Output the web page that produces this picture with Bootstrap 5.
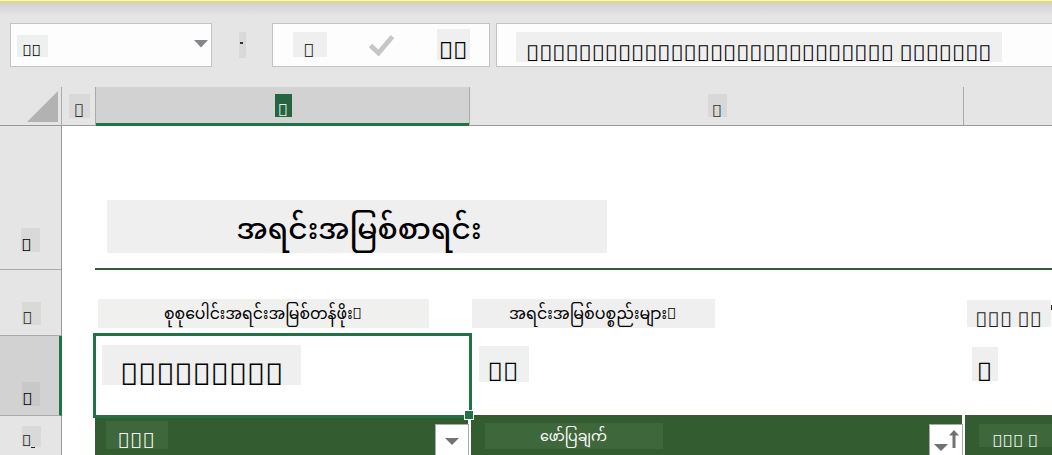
<!DOCTYPE html>
<html lang="my">
<head>
<meta charset="utf-8">
<meta name="viewport" content="width=device-width, initial-scale=1">
<title>Spreadsheet</title>
<link href="https://cdn.jsdelivr.net/npm/bootstrap@5.3.0/dist/css/bootstrap.min.css" rel="stylesheet">
<style>
body{width:1052px;height:455px;overflow:hidden;background:#e5e5e5;font-family:"Noto Sans",sans-serif;color:#000}
.notice{height:23px;border-top:1px solid #fff7b0;background:linear-gradient(#dada8b 0 2px,#d0d0d0 2px,#e5e5e5 14px)}
.bar{height:44px;padding-left:10px}
.bar>*{flex-shrink:0}
.field{background:#fdfdfd;border:1px solid #c3c3c3;height:44px}
.name-box{width:202px}
.tools{width:218px;margin-left:26px}
.formula{width:570px;margin-left:6px}
/* text chips: --w/--h size, --x/--y offset in the parent, --p text inset, --l line height, --f font size */
.chip{flex:none;width:var(--w);height:var(--h);margin:var(--y,0) 0 0 var(--x,0);padding-left:var(--p,0);font-size:var(--f);line-height:var(--l);background:var(--c,#efefef);white-space:pre}
.my{font-family:"Noto Sans Myanmar","Noto Sans",sans-serif}
.c-name{--w:31px;--h:22px;--x:6px;--y:11px;--p:5.6px;--f:15.3px;--l:30.2px;--c:#eef0ef}
.c-sep{--w:7px;--h:26px;--x:27px;--y:9px;--c:#d9d9d9}
.c-sep i{display:block;width:3px;height:2px;margin:10px 0 0 1px;background:#333}
.c-cancel{--w:34px;--h:25px;--x:20px;--y:8px;--p:10px;--f:18.5px;--l:35.6px;color:#333}
.c-fx{--w:33px;--h:31px;--y:5px;--p:2px;--f:23.7px;--l:43.6px}
.c-formula{--w:486px;--h:30px;--x:19px;--y:8px;--p:10px;--f:21.9px;--l:41px}
.c-cola{--w:21px;--h:24px;--x:7px;--y:7px;--p:4.5px;--f:17.6px;--l:33.3px;--c:#d9d9d9;color:#333}
.c-colb{--w:17px;--h:23px;--x:179px;--y:7px;--p:2.5px;--f:16.8px;--l:31px;--c:#246540;color:#e8f4ec}
.c-colc{--w:19px;--h:23px;--x:238px;--y:7px;--p:3.5px;--f:17.2px;--l:33.6px;--c:#d8d8d8;color:#333}
.c-r1{--w:19px;--h:24px;--x:21px;--y:102px;--p:0;--f:17.3px;--l:34px;--c:#d9d9d9}
.c-r2{--w:19px;--h:23px;--x:22px;--y:32px;--p:0;--f:17px;--l:31.8px;--c:#d9d9d7;color:#333}
.c-r3{--w:18px;--h:24px;--x:22px;--y:46px;--p:0;--f:17.3px;--l:34px;--c:#c8c8c8}
.c-r4{--w:19px;--h:21px;--x:22px;--y:10px;--p:0;--f:15.8px;--l:28.7px;--c:#d9d9d9;color:#222}
.c-title{--w:500px;--h:53px;--x:12px;--y:74px;--p:129.500px;--f:29.7px;--l:65px;font-weight:500}
.c-l1{--w:331px;--h:29px;--x:3px;--y:29px;--p:66px;--f:15.7px;--l:33px;--c:#f0f0ee}
.c-l2{--w:243px;--h:29px;--x:2px;--y:29px;--p:37px;--f:15.9px;--l:33px}
.c-l3{--w:84px;--h:27px;--x:3px;--y:30px;--p:8.3px;--f:20.5px;--l:38.6px;color:#222}
.c-v1{--w:199px;--h:40px;--x:7px;--y:10px;--p:18px;--f:30.2px;--l:58.3px}
.c-v2{--w:50px;--h:36px;--x:9px;--y:11px;--p:8.3px;--f:25.8px;--l:51.6px;--c:#eff1f0}
.c-v3{--w:26px;--h:34px;--x:8px;--y:12px;--p:4.5px;--f:26px;--l:49.6px}
.c-h1{--w:62px;--h:28px;--x:11px;--y:6px;--p:11.5px;--f:20.8px;--l:39.5px;--c:#3e673b;color:#f2f6f2}
.c-h2{--w:178px;--h:26px;--x:14px;--y:8px;--p:55px;--f:14.2px;--l:30px;--c:#3e673b;color:#fff}
.c-h3{--w:73px;--h:23px;--x:14px;--y:9px;--p:13px;--f:17.2px;--l:33.4px;--c:#3e673b;color:#f2f6f2}
.heads{height:39px;margin-top:20px}
.heads>div,.heads .cols>div{border-bottom:1px solid #999}
.corner{width:62px;border-right:1px solid #aaa;padding:4px 3px 0 0}
.cols{display:grid;grid-template-columns:33px 375px 494px 88px}
.heads .cols>.sel-col{background:#d2d2d2;border-left:1px solid #aaa;border-right:1px solid #aaa;border-bottom:0;box-shadow:inset 0 -3px #217346}
.heads .colc{border-right:1px solid #aaa}
.rownums{width:62px;border-right:1px solid #999}
.rownums>div{border-bottom:1px solid #aaa}
.n1{height:144px}.n2{height:66px}.n3{height:80px;background:#d2d2d2;border-right:3px solid #217346;margin-right:-1px}.n4{height:39px}
.sheet{width:990px;background:#fff}
.title-row{height:144px;margin-left:33px;border-bottom:2px solid #335c30}
.labels{height:65px}.values{height:80px}.thead-row{height:40px}
.band{background:#335c30}
.b1{margin-right:2px}.b2{margin:0 2px 0 1px}.b3{margin-left:1px}
.filter{width:34px;height:31px;margin:9px -1px 0 auto;background:#fff;border:1px solid #aaa;border-bottom:0}
.selection{position:absolute;left:31px;top:207px;width:379px;height:85px;border:3px solid #217346}
.selection::after{content:"";position:absolute;right:-5px;bottom:-5px;width:10px;height:10px;background:#217346;border:1px solid #fff}
.speck{position:absolute;background:#222}
</style>
</head>
<body class="d-flex flex-column">
<div class="notice flex-shrink-0"></div>
<div class="bar d-flex flex-shrink-0">
  <div class="field name-box d-flex">
    <div class="chip c-name">&#xF8F8;&#xF8F8;</div>
    <svg class="ms-auto flex-shrink-0" width="18" height="42"><path d="M1 16h14l-7 7.500z" fill="#828589"/></svg>
  </div>
  <div class="chip c-sep"><i></i></div>
  <div class="field tools d-flex">
    <div class="chip c-cancel">&#xF8F8;</div>
    <svg class="flex-shrink-0" width="110" height="42"><path d="M43.500 21.500l8 7.500 14-16.500" fill="none" stroke="#c6c6c6" stroke-width="4.800"/></svg>
    <div class="chip c-fx">&#xF8F8;&#xF8F8;</div>
  </div>
  <div class="field formula d-flex">
    <div class="chip c-formula">&#xF8F8;&#xF8F8;&#xF8F8;&#xF8F8;&#xF8F8;&#xF8F8;&#xF8F8;&#xF8F8;&#xF8F8;&#xF8F8;&#xF8F8;&#xF8F8;&#xF8F8;&#xF8F8;&#xF8F8;&#xF8F8;&#xF8F8;&#xF8F8;&#xF8F8;&#xF8F8;&#xF8F8;&#xF8F8;&#xF8F8;&#xF8F8;&#xF8F8;&#xF8F8;&#xF8F8;&#xF8F8; &#xF8F8;&#xF8F8;&#xF8F8;&#xF8F8;&#xF8F8;&#xF8F8;&#xF8F8;</div>
  </div>
</div>
<div class="heads d-flex flex-shrink-0">
  <div class="corner d-flex justify-content-end"><svg width="31" height="31"><path d="M31 0v31H0z" fill="#b2b2b2"/></svg></div>
  <div class="cols border-0">
    <div class="d-flex"><div class="chip c-cola">&#xF8F8;</div></div>
    <div class="sel-col d-flex"><div class="chip c-colb">&#xF8F8;</div></div>
    <div class="colc d-flex"><div class="chip c-colc">&#xF8F8;</div></div>
    <div></div>
  </div>
</div>
<div class="d-flex flex-grow-1">
  <div class="rownums flex-shrink-0 position-relative">
    <div class="n1 d-flex"><div class="chip c-r1">&#xF8F8;</div></div>
    <div class="n2 d-flex"><div class="chip c-r2">&#xF8F8;</div></div>
    <div class="n3 d-flex"><div class="chip c-r3">&#xF8F8;</div></div>
    <div class="n4 d-flex border-0"><div class="chip c-r4">&#xF8F8;</div></div>
    <span class="speck" style="left:31px;top:321px;width:4px;height:1px"></span>
  </div>
  <div class="sheet position-relative flex-shrink-0">
    <div class="title-row d-flex"><div class="chip my c-title">အရင်းအမြစ်စာရင်း</div></div>
    <div class="cols labels">
      <div></div>
      <div class="d-flex"><div class="chip my c-l1">စုစုပေါင်းအရင်းအမြစ်တန်ဖိုး&#xF8F8;</div></div>
      <div class="d-flex"><div class="chip my c-l2">အရင်းအမြစ်ပစ္စည်းများ&#xF8F8;</div></div>
      <div class="d-flex"><div class="chip c-l3">&#xF8F8;&#xF8F8;&#xF8F8; &#xF8F8;&#xF8F8;</div></div>
    </div>
    <div class="cols values">
      <div></div>
      <div class="d-flex"><div class="chip c-v1">&#xF8F8;&#xF8F8;&#xF8F8;&#xF8F8;&#xF8F8;&#xF8F8;&#xF8F8;&#xF8F8;&#xF8F8;</div></div>
      <div class="d-flex"><div class="chip c-v2">&#xF8F8;&#xF8F8;</div></div>
      <div class="d-flex"><div class="chip c-v3">&#xF8F8;</div></div>
    </div>
    <div class="cols thead-row">
      <div></div>
      <div class="band b1 d-flex"><div class="chip c-h1">&#xF8F8;&#xF8F8;&#xF8F8;</div>
        <div class="filter"><svg width="32" height="30"><path d="M9 13h14l-7 7z" fill="#707274"/></svg></div></div>
      <div class="band b2 d-flex"><div class="chip my c-h2">ဖော်ပြချက်</div>
        <div class="filter"><svg width="32" height="30"><path d="M4 19h14l-7 7zM22.500 23V10.500H19l5-5.500 5 5.500h-3.500V23z" fill="#707274"/></svg></div></div>
      <div class="band b3 d-flex"><div class="chip c-h3">&#xF8F8;&#xF8F8;&#xF8F8; &#xF8F8;</div></div>
    </div>
    <div class="selection"></div>
    <span class="speck" style="left:989px;top:179px;width:1px;height:5px"></span>
  </div>
</div>
<script src="https://cdn.jsdelivr.net/npm/bootstrap@5.3.0/dist/js/bootstrap.bundle.min.js"></script>
</body>
</html>
